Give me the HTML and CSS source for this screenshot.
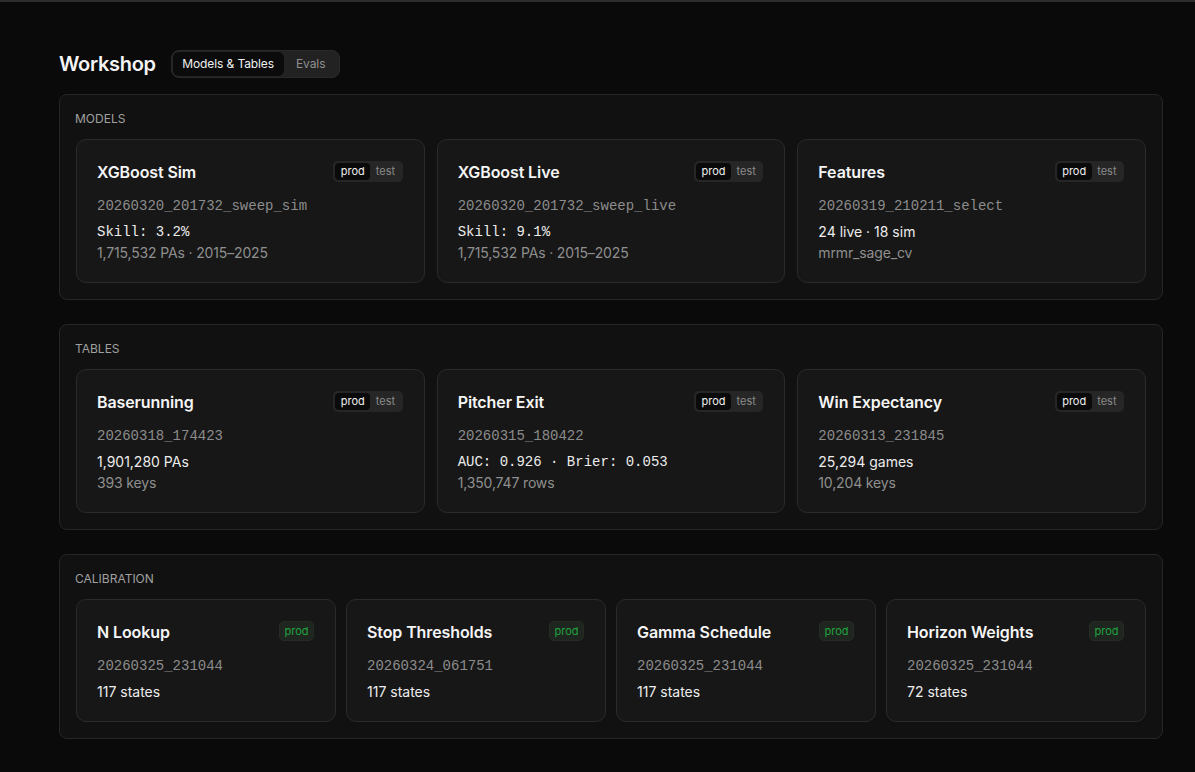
FILE: index.html
```html
<!DOCTYPE html>
<html lang="en">
<head>
    <meta charset="UTF-8">
    <meta name="viewport" content="width=device-width, initial-scale=1.0">
    <title>Workshop</title>
    <link rel="stylesheet" href="styles.css">
</head>
<body>
    <div class="topbar"></div>

    <main class="page">
        <div class="page-head">
            <h1>Workshop</h1>
            <div class="tabs">
                <span class="tab active">Models &amp; Tables</span>
                <span class="tab">Evals</span>
            </div>
        </div>

        <section class="group">
            <div class="group-label">Models</div>
            <div class="cards cols-3">
                <div class="card">
                    <div class="card-head">
                        <h2>XGBoost Sim</h2>
                        <div class="env"><span class="on">prod</span><span>test</span></div>
                    </div>
                    <div class="run">20260320_201732_sweep_sim</div>
                    <div class="stat mono">Skill: 3.2%</div>
                    <div class="sub">1,715,532 PAs · 2015–2025</div>
                </div>
                <div class="card">
                    <div class="card-head">
                        <h2>XGBoost Live</h2>
                        <div class="env"><span class="on">prod</span><span>test</span></div>
                    </div>
                    <div class="run">20260320_201732_sweep_live</div>
                    <div class="stat mono">Skill: 9.1%</div>
                    <div class="sub">1,715,532 PAs · 2015–2025</div>
                </div>
                <div class="card">
                    <div class="card-head">
                        <h2>Features</h2>
                        <div class="env"><span class="on">prod</span><span>test</span></div>
                    </div>
                    <div class="run">20260319_210211_select</div>
                    <div class="stat">24 live · 18 sim</div>
                    <div class="sub">mrmr_sage_cv</div>
                </div>
            </div>
        </section>

        <section class="group">
            <div class="group-label">Tables</div>
            <div class="cards cols-3">
                <div class="card">
                    <div class="card-head">
                        <h2>Baserunning</h2>
                        <div class="env"><span class="on">prod</span><span>test</span></div>
                    </div>
                    <div class="run">20260318_174423</div>
                    <div class="stat">1,901,280 PAs</div>
                    <div class="sub">393 keys</div>
                </div>
                <div class="card">
                    <div class="card-head">
                        <h2>Pitcher Exit</h2>
                        <div class="env"><span class="on">prod</span><span>test</span></div>
                    </div>
                    <div class="run">20260315_180422</div>
                    <div class="stat mono">AUC: 0.926 · Brier: 0.053</div>
                    <div class="sub">1,350,747 rows</div>
                </div>
                <div class="card">
                    <div class="card-head">
                        <h2>Win Expectancy</h2>
                        <div class="env"><span class="on">prod</span><span>test</span></div>
                    </div>
                    <div class="run">20260313_231845</div>
                    <div class="stat">25,294 games</div>
                    <div class="sub">10,204 keys</div>
                </div>
            </div>
        </section>

        <section class="group">
            <div class="group-label">Calibration</div>
            <div class="cards cols-4">
                <div class="card">
                    <div class="card-head">
                        <h2>N Lookup</h2>
                        <span class="live">prod</span>
                    </div>
                    <div class="run">20260325_231044</div>
                    <div class="stat">117 states</div>
                </div>
                <div class="card">
                    <div class="card-head">
                        <h2>Stop Thresholds</h2>
                        <span class="live">prod</span>
                    </div>
                    <div class="run">20260324_061751</div>
                    <div class="stat">117 states</div>
                </div>
                <div class="card">
                    <div class="card-head">
                        <h2>Gamma Schedule</h2>
                        <span class="live">prod</span>
                    </div>
                    <div class="run">20260325_231044</div>
                    <div class="stat">117 states</div>
                </div>
                <div class="card">
                    <div class="card-head">
                        <h2>Horizon Weights</h2>
                        <span class="live">prod</span>
                    </div>
                    <div class="run">20260325_231044</div>
                    <div class="stat">72 states</div>
                </div>
            </div>
        </section>
    </main>
</body>
</html>
```

FILE: styles.css
```css
* {
    margin: 0;
    padding: 0;
    box-sizing: border-box;
}

body {
    font-family: 'Inter', 'Noto Sans', sans-serif;
    background: #0a0a0a;
    color: #f5f5f5;
    min-height: 100vh;
}

.topbar {
    height: 2px;
    background: #2e2e2e;
}

.page {
    padding: 48px 32px 32px 59px;
}

.page-head {
    display: flex;
    align-items: center;
    gap: 15px;
    margin-bottom: 16px;
}

.page-head h1 {
    font-size: 20px;
    font-weight: 600;
    line-height: 28px;
    letter-spacing: -0.3px;
}

.tabs {
    display: flex;
    padding: 1px;
    background: #222;
    border: 1px solid #2a2a2a;
    border-radius: 8px;
}

.tab {
    font-size: 12px;
    line-height: 24px;
    padding: 0 9.5px;
    color: #8f8f8f;
    border-radius: 6px;
    letter-spacing: -0.1px;
}

.tab.active {
    background: #0b0b0b;
    color: #f0f0f0;
}

.tab + .tab {
    padding: 0 12.5px;
}

/* sections */
.group {
    width: 1104px;
    background: #111;
    border: 1px solid #262626;
    border-radius: 8px;
    padding: 16px;
    margin-bottom: 24px;
}

.group-label {
    font-size: 12px;
    line-height: 16px;
    text-transform: uppercase;
    color: #a0a0a0;
    margin-bottom: 12px;
    margin-left: -1px;
}

.cards {
    display: grid;
}

.cols-3 {
    grid-template-columns: repeat(3, 1fr);
    gap: 12px;
}

.cols-4 {
    grid-template-columns: repeat(4, 1fr);
    gap: 10px;
}

.card {
    background: #171717;
    border: 1px solid #2b2b2b;
    border-radius: 10px;
    padding: 20px 20px 19px;
}

.card-head {
    display: flex;
    justify-content: space-between;
    align-items: flex-start;
}

.card-head h2 {
    font-size: 16px;
    font-weight: 600;
    line-height: 24px;
    color: #f5f5f5;
    letter-spacing: -0.1px;
}

.env {
    display: flex;
    margin-top: 1px;
    margin-right: 1px;
    padding: 2px;
    background: #262626;
    border-radius: 5px;
    font-size: 11px;
    line-height: 17px;
}

.env span {
    padding: 0 5.5px;
    color: #8a8a8a;
}

.env span.on {
    background: #0a0a0a;
    color: #f0f0f0;
    border-radius: 4px;
}

.live {
    margin-top: 1px;
    margin-right: 1px;
    padding: 0 4.5px;
    font-size: 11px;
    line-height: 18px;
    color: #1fa33f;
    background: #1f261f;
    border: 1px solid #262b26;
    border-radius: 5px;
}

.run {
    font-family: 'Liberation Mono', 'DejaVu Sans Mono', monospace;
    font-size: 14px;
    line-height: 20px;
    color: #8c8c8c;
    margin-top: 12px;
}

.stat {
    font-size: 14px;
    line-height: 20px;
    color: #ececec;
    margin-top: 6px;
}

.stat.mono {
    font-family: 'Liberation Mono', 'DejaVu Sans Mono', monospace;
}

.sub {
    font-size: 14px;
    line-height: 20px;
    color: #8f8f8f;
    margin-top: 1px;
    letter-spacing: -0.15px;
}
```
